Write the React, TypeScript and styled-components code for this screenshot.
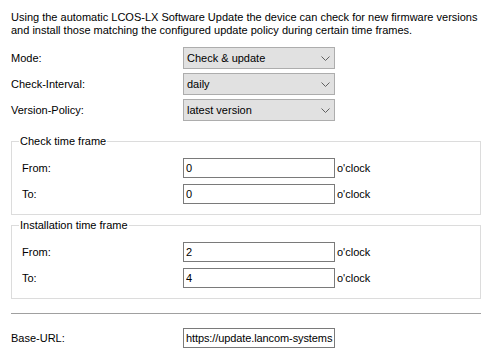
import styled, { createGlobalStyle } from 'styled-components';

const GlobalStyle = createGlobalStyle`
  html, body {
    margin: 0;
    padding: 0;
    background: #ffffff;
  }
  body {
    font-family: "Liberation Sans", Arial, sans-serif;
    font-size: 11px;
    color: #000000;
  }
`;

const Page = styled.div`
  width: 491px;
  height: 361px;
  box-sizing: border-box;
  padding: 11px 10px 0 11px;
  overflow: hidden;
`;

const Intro = styled.p`
  margin: 0 0 10px 0;
  line-height: 13px;
`;

const Rows = styled.div`
  display: flex;
  flex-direction: column;
  gap: ${(p: { $gap: number }) => p.$gap}px;
`;

const Row = styled.div`
  display: flex;
  align-items: center;
  height: ${(p: { $height: number }) => p.$height}px;
`;

const Label = styled.span`
  width: ${(p: { $width: number }) => p.$width}px;
  flex-shrink: 0;
  color: #000000;
`;

const ComboBox = styled.div`
  width: 152px;
  height: 22px;
  box-sizing: border-box;
  display: flex;
  align-items: center;
  justify-content: space-between;
  padding: 0 4px 0 3px;
  background: #e1e1e1;
  border: 1px solid #adadad;
`;

const Group = styled.fieldset`
  margin: 0;
  padding: 10px 10px 10px 10px;
  border: 1px solid #dcdcdc;
  min-width: 0;
  margin-top: ${(p: { $top: number }) => p.$top}px;
`;

const Legend = styled.legend`
  margin-left: -3px;
  padding: 0 1px;
  line-height: 14px;
`;

const TextBox = styled.input`
  width: 152px;
  height: 20px;
  box-sizing: border-box;
  margin: 0;
  padding: 0 1px 0 2px;
  border: 1px solid #7a7a7a;
  border-radius: 0;
  font-family: "Liberation Sans", Arial, sans-serif;
  font-size: 11px;
  letter-spacing: -0.1px;
  color: #000000;
  background: #ffffff;
  outline: none;
`;

const Unit = styled.span`
  margin-left: 2px;
  color: #000000;
`;

const Separator = styled.hr`
  margin: 14px 0 14px 0;
  border: none;
  border-top: 1px solid #a0a0a0;
  height: 0;
`;

function Chevron() {
  return (
    <svg width="9" height="5" viewBox="0 0 9 5">
      <path d="M0.5 0.5 L4.5 4.5 L8.5 0.5" fill="none" stroke="#606060" strokeWidth="1" />
    </svg>
  );
}

function SelectRow({ label, value }: { label: string; value: string }) {
  return (
    <Row $height={22}>
      <Label $width={172}>{label}</Label>
      <ComboBox>
        <span>{value}</span>
        <Chevron />
      </ComboBox>
    </Row>
  );
}

function TimeRow({ label, value }: { label: string; value: string }) {
  return (
    <Row $height={20}>
      <Label $width={161}>{label}</Label>
      <TextBox defaultValue={value} readOnly />
      <Unit>o'clock</Unit>
    </Row>
  );
}

function TimeFrame({ title, from, to, top }: { title: string; from: string; to: string; top: number }) {
  return (
    <Group $top={top}>
      <Legend>{title}</Legend>
      <Rows $gap={6}>
        <TimeRow label="From:" value={from} />
        <TimeRow label="To:" value={to} />
      </Rows>
    </Group>
  );
}

export default function App() {
  return (
    <Page>
      <GlobalStyle />
      <Intro>
        Using the automatic LCOS-LX Software Update the device can check for new firmware versions
        <br />
        and install those matching the configured update policy during certain time frames.
      </Intro>
      <Rows $gap={4}>
        <SelectRow label="Mode:" value="Check & update" />
        <SelectRow label="Check-Interval:" value="daily" />
        <SelectRow label="Version-Policy:" value="latest version" />
      </Rows>
      <TimeFrame title="Check time frame" from="0" to="0" top={13} />
      <TimeFrame title="Installation time frame" from="2" to="4" top={3} />
      <Separator />
      <Row $height={20}>
        <Label $width={172}>Base-URL:</Label>
        <TextBox defaultValue="https://update.lancom-systems.de" readOnly />
      </Row>
    </Page>
  );
}
